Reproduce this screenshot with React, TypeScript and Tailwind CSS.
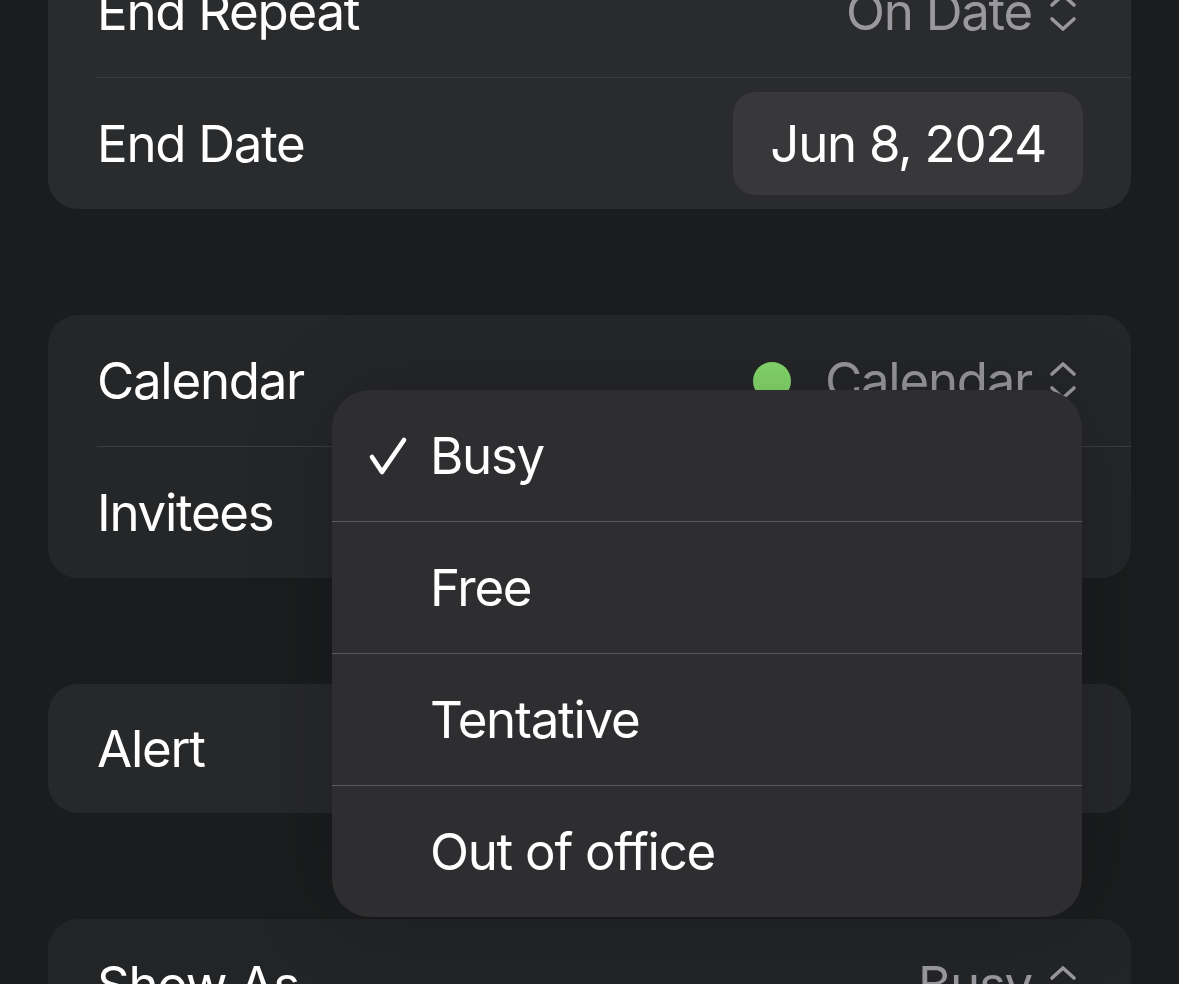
import React from "react";

function UpDown({ up = true, down = true }: { up?: boolean; down?: boolean }) {
  return (
    <svg width="30" height="44" viewBox="0 0 30 44" fill="none" stroke="currentColor" strokeWidth="3.6" strokeLinecap="round" strokeLinejoin="round">
      {up && <path d="M4 15 L15 5 L26 15" />}
      {down && <path d="M4 29 L15 39 L26 29" />}
    </svg>
  );
}

function Check() {
  return (
    <svg width="40" height="42" viewBox="0 0 40 42" fill="none" stroke="#fff" strokeWidth="4.6" strokeLinecap="round" strokeLinejoin="round">
      <path d="M4 22 L14 37 L36 5" />
    </svg>
  );
}

function Row({ label, children, h = "h-[131px]" }: { label: string; children?: React.ReactNode; h?: string }) {
  return (
    <div className={`flex ${h} items-center justify-between pl-[49px] pr-[53px]`}>
      <span className="text-white">{label}</span>
      <div className="flex items-center text-[#98989e]">{children}</div>
    </div>
  );
}

function Divider() {
  return <div className="ml-[49px] h-px bg-[#3c3c3f]" />;
}

const menu = ["Busy", "Free", "Tentative", "Out of office"];

export default function App() {
  return (
    <div className="relative h-[984px] overflow-hidden bg-[#1b1c1d] text-[51px] leading-none tracking-[-0.025em] font-['Inter','Noto_Sans',sans-serif]">
      <div className="-mt-[54px] flex flex-col gap-[106px] px-[48px]">
        <div className="rounded-[30px] bg-[#2a2b2d]">
          <Row label="End Repeat">
            <span>On Date</span>
            <span className="ml-[16px]">
              <UpDown />
            </span>
          </Row>
          <Divider />
          <div className="flex h-[131px] items-center justify-between pl-[49px] pr-[48px]">
            <span className="text-white">End Date</span>
            <div className="flex h-[103px] items-center rounded-[22px] bg-[#38383b] px-[37px] text-white">
              Jun 8, 2024
            </div>
          </div>
        </div>

        <div className="rounded-[30px] bg-[#252628]">
          <Row label="Calendar">
            <span className="mr-[34px] h-[38px] w-[38px] rounded-full bg-[#86d96c]" />
            <span>Calendar</span>
            <span className="ml-[16px]">
              <UpDown />
            </span>
          </Row>
          <Divider />
          <Row label="Invitees" />
        </div>

        <div className="rounded-[30px] bg-[#27282a]">
          <Row label="Alert" h="h-[129px]" />
        </div>

        <div className="rounded-[30px] bg-[#232426]">
          <Row label="Show As">
            <span>Busy</span>
            <span className="ml-[16px]">
              <UpDown down={false} />
            </span>
          </Row>
        </div>
      </div>

      <div className="absolute left-[332px] top-[390px] w-[750px] overflow-hidden rounded-[38px] bg-[#2e2e30] shadow-[0_0_90px_rgba(0,0,0,0.2)]">
        {menu.map((item, i) => (
          <div key={item} className={i > 0 ? "border-t border-[#59595b]" : ""}>
            <div className="flex h-[131px] items-center">
              <div className="flex w-[98px] justify-end pr-[22px]">{i === 0 && <Check />}</div>
              <span className="text-white">{item}</span>
            </div>
          </div>
        ))}
      </div>
    </div>
  );
}
